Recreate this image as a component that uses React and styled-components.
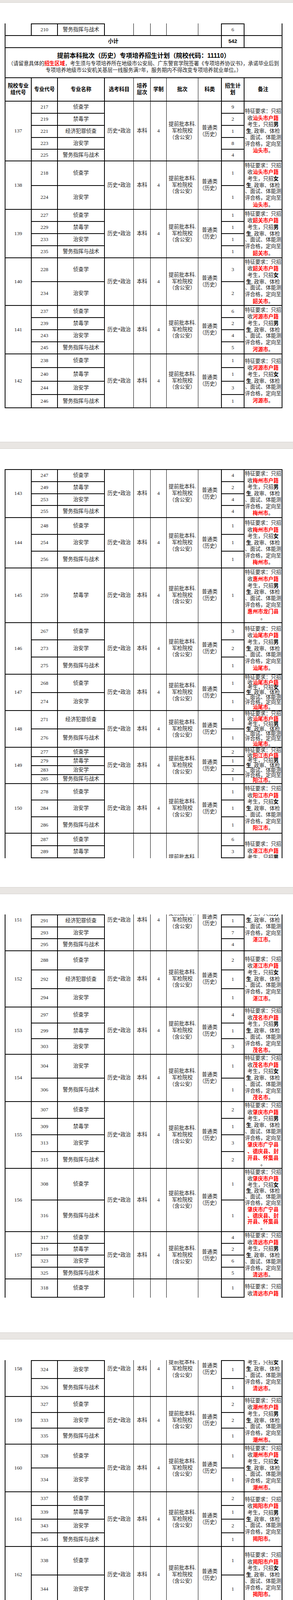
import styled, { createGlobalStyle } from "styled-components";

const GlobalStyle = createGlobalStyle`
  html, body { margin: 0; padding: 0; background: #e9e6e3; }
  body {
    font-family: "Liberation Serif", "Noto Sans CJK SC", serif;
    color: #222;
  }
`;

//#region data
const COLS = [68, 67, 120, 75, 43, 41, 81, 59, 58, 98];
// column boundaries (after column k) that carry a heavy rule
const HEAVY = new Set([1, 2, 3, 8, 9]);
const LH = 16.7;

const HEAD = [
  ["院校专业", "组代号"],
  ["专业代号"],
  ["专业名称"],
  ["选考科目"],
  ["培养", "层次"],
  ["学制"],
  ["批次"],
  ["科类"],
  ["招生计", "划"],
  ["备注"],
];

const Z = "侦查学";
const J = "禁毒学";
const A = "治安学";
const W = "警务指挥与战术";
const E = "经济犯罪侦查";

const BATCH = ["提前批本科.", "军检院校", "（含公安）"];
const KIND = ["普通类", "（历史）"];

const note = (city, g, tail) => [
  [["特征要求：只招"]],
  [["收"], [`${city}户籍`, "r"]],
  [["考生，只招"], [g, "b"]],
  [["生", "b"], [", 政审、体检"]],
  [["、面试、体能测"]],
  [["评合格，定向至"]],
  ...(tail || [[[city, "r"], ["。"]]]),
];
const ZQ = [
  [["肇庆市广宁县", "r"]],
  [["、德庆县、封", "r"]],
  [["开县、怀集县", "r"]],
  [["。"]],
];
const HZ = [[["惠州市龙门县", "r"]], [["。"]]];

const grp = (id, rows, city, g, extra = {}) => ({
  t: "group",
  id,
  subj: "历史*政治",
  level: "本科",
  years: "4",
  batch: BATCH,
  kind: KIND,
  note: city ? note(city, g, extra.tail) : [],
  rows,
  ...extra,
});

const PAGES = [
  {
    h: 1124,
    pad: 53,
    items: [
      grp("", [["210", W, "6", 31]], null, null, {
        split: "b",
        subj: "",
        level: "",
        years: "",
        batch: [],
        kind: [],
      }),
      { t: "sum", label: "小计", value: "542", h: 31 },
      {
        t: "title",
        h: 77,
        text: "提前本科批次（历史）专项培养招生计划（院校代码：11110）",
        sub: true,
      },
      { t: "head", h: 60 },
      grp("137", [["217", Z, "9", 31], ["219", J, "2", 31], ["221", E, "1", 31], ["223", A, "8", 30], ["225", W, "4", 30]], "汕头市", "男"),
      grp("138", [["218", Z, "1", 63], ["224", A, "1", 61]], "汕头市", "女"),
      grp("139", [["227", Z, "1", 31], ["229", J, "1", 31], ["233", A, "1", 31], ["235", W, "1", 31]], "韶关市", "男"),
      grp("140", [["228", Z, "3", 61], ["234", A, "2", 61]], "韶关市", "女"),
      grp("141", [["237", Z, "6", 31], ["239", J, "2", 31], ["243", A, "4", 31], ["245", W, "5", 31]], "河源市", "男"),
      grp("142", [["238", Z, "1", 35], ["240", J, "1", 35], ["244", A, "3", 34], ["246", W, "1", 35]], "河源市", "女"),
    ],
  },
  {
    h: 1122,
    pad: 52,
    items: [
      grp("143", [["247", Z, "4", 32], ["249", J, "2", 31], ["253", A, "4", 30], ["255", W, "4", 31]], "梅州市", "男"),
      grp("144", [["248", Z, "1", 43], ["254", A, "1", 43], ["256", W, "1", 43]], "梅州市", "女"),
      grp("145", [["259", J, "1", 140]], "惠州市", "男", { tail: HZ }),
      grp("146", [["267", Z, "3", 44], ["273", A, "2", 44], ["275", W, "1", 44]], "汕尾市", "男"),
      grp("147", [["268", Z, "1", 47], ["274", A, "1", 46]], "汕尾市", "女"),
      grp("148", [["271", E, "1", 47], ["276", W, "1", 47]], "汕尾市", "男"),
      grp("149", [["277", Z, "2", 24], ["279", J, "1", 23], ["283", A, "2", 23], ["285", W, "1", 23]], "阳江市", "男"),
      grp("150", [["278", Z, "1", 42], ["284", A, "1", 43], ["286", W, "1", 42]], "阳江市", "女"),
      grp("151", [["287", Z, "6", 32], ["289", J, "3", 32]], "湛江市", "男", { split: "a", full: 157 }),
    ],
  },
  {
    h: 1122,
    pad: 52,
    items: [
      grp("151", [["291", E, "1", 32], ["293", A, "7", 30], ["295", W, "4", 31]], "湛江市", "男", { split: "b", full: 157 }),
      grp("152", [["288", Z, "2", 49], ["292", E, "1", 48], ["294", A, "1", 47]], "湛江市", "女"),
      grp("153", [["297", Z, "4", 41], ["299", J, "1", 40], ["303", A, "3", 40]], "茂名市", "男"),
      grp("154", [["304", A, "1", 61], ["306", W, "1", 60]], "茂名市", "女"),
      grp("155", [["307", Z, "2", 43], ["309", J, "1", 42], ["313", A, "3", 43], ["315", W, "2", 43]], "肇庆市", "男", { tail: ZQ }),
      grp("156", [["308", Z, "1", 81], ["316", W, "1", 81]], "肇庆市", "女", { tail: ZQ }),
      grp("157", [["317", Z, "4", 30], ["319", J, "2", 30], ["323", A, "6", 31], ["325", W, "5", 30]], "清远市", "男"),
      grp("158", [["318", Z, "1", 48]], "清远市", "女", { split: "a", full: 141 }),
    ],
  },
  {
    h: 1122,
    pad: 53,
    items: [
      grp("158", [["324", A, "1", 47], ["326", W, "1", 46]], "清远市", "女", { split: "b", full: 141 }),
      grp("159", [["327", Z, "2", 41], ["333", A, "2", 40], ["335", W, "1", 41]], "潮州市", "男"),
      grp("160", [["328", Z, "1", 61], ["334", A, "1", 61]], "潮州市", "女"),
      grp("161", [["337", Z, "2", 35], ["339", J, "1", 35], ["343", A, "2", 35], ["345", W, "1", 35]], "揭阳市", "男"),
      grp("162", [["338", Z, "1", 73], ["344", A, "1", 72]], "揭阳市", "女"),
      grp("163", [["347", Z, "2", 35], ["349", J, "1", 35], ["353", A, "2", 35], ["355", W, "1", 35]], "云浮市", "男"),
      grp("164", [["348", Z, "1", 56], ["354", A, "1", 56]], "云浮市", "女"),
      { t: "sum", label: "小计", value: "202", h: 60 },
      { t: "title", h: 50, text: "本科批次（物理）招生计划（院校代码：11110）" },
    ],
  },
  {
    h: 545,
    pad: 54,
    items: [
      { t: "head", h: 66 },
      grp("201", [["401", "法学", "19", 34], ["403", "社会工作", "15", 33], ["405", "行政管理", "15", 34]], null, null, {
        subj: "物理",
        batch: ["本科批"],
        kind: ["普通类", "（物理）"],
      }),
      { t: "sum", label: "小计", value: "49", h: 33 },
      { t: "title", h: 51, text: "本科批次（历史）招生计划（院校代码：11110）" },
      { t: "head", h: 57 },
      grp("202", [["402", "法学", "45", 33], ["404", "社会工作", "37", 33], ["406", "行政管理", "38", 33]], null, null, {
        subj: "历史",
        batch: ["本科批"],
        kind: ["普通类", "（历史）"],
      }),
      { t: "sum", label: "小计", value: "120", h: 37 },
      { t: "sum", label: "合计", value: "1762", h: 36, plain: true },
    ],
  },
];
//#endregion

const asLines = (arr) => arr.map((s) => [[s]]);

// for a group split over two pages, keep only the lines that show in this part
function visibleLines(lines, lh, stackH, visH, split) {
  if (!split) return lines;
  const start = (stackH - lines.length * lh) / 2;
  return lines.map((segs, i) => {
    const top = start + i * lh;
    const shown = split === "a" ? top < visH - 3 : top + lh > stackH - visH + 3;
    return shown ? segs : [];
  });
}

// turns the page items into grid rows + placed cells
function buildPage(items) {
  const heights = [];
  const cells = [];
  items.forEach((it) => {
    const r0 = heights.length + 1;
    if (it.t === "group") {
      const total = it.rows.reduce((s, r) => s + r[3], 0);
      const full = it.full || total;
      const n = it.rows.length;
      const merged = (col, lines) => {
        // squeeze a long note into a short group instead of cutting it
        const lh = lines.length ? Math.min(LH, (full - 4) / lines.length) : LH;
        cells.push({
          kind: "stack",
          row: r0,
          rspan: n,
          col,
          cspan: 1,
          lines: visibleLines(lines, lh, full - 2, total - 2, it.split),
          full,
          lh,
          anchor: it.split === "b" ? "end" : it.split === "a" ? "start" : "center",
          openTop: it.split === "b",
          openBottom: it.split === "a",
        });
      };
      merged(1, it.id ? [[[it.id]]] : []);
      merged(4, it.subj ? [[[it.subj]]] : []);
      merged(5, it.level ? [[[it.level]]] : []);
      merged(6, it.years ? [[[it.years]]] : []);
      merged(7, asLines(it.batch));
      merged(8, asLines(it.kind));
      merged(10, it.note);
      it.rows.forEach((r, i) => {
        heights.push(r[3]);
        [2, 3, 9].forEach((col, k) =>
          cells.push({ kind: "text", row: r0 + i, rspan: 1, col, cspan: 1, text: r[k] })
        );
      });
    } else if (it.t === "head") {
      heights.push(it.h);
      HEAD.forEach((lines, i) =>
        cells.push({ kind: "lines", row: r0, rspan: 1, col: i + 1, cspan: 1, lines: asLines(lines), bold: true })
      );
    } else if (it.t === "sum") {
      heights.push(it.h);
      cells.push({ kind: "text", row: r0, rspan: 1, col: 1, cspan: 8, text: it.label, bold: true });
      cells.push({ kind: "text", row: r0, rspan: 1, col: 9, cspan: 1, text: it.value, bold: !it.plain });
      cells.push({ kind: "text", row: r0, rspan: 1, col: 10, cspan: 1, text: "" });
    } else {
      heights.push(it.h);
      cells.push({ kind: "title", row: r0, rspan: 1, col: 1, cspan: 10, text: it.text, sub: it.sub });
    }
  });
  const last = heights.length;
  cells.forEach((c) => {
    const endCol = c.col + c.cspan - 1;
    c.t = c.openTop ? 0 : c.row === 1 ? 2 : 1;
    c.b = c.openBottom ? 0 : c.row + c.rspan - 1 === last ? 2 : 1;
    c.l = c.col === 1 ? 2 : HEAVY.has(c.col - 1) ? 1 : 0;
    c.r = endCol === 10 ? 2 : 1;
  });
  return { heights, cells };
}

function Lines({ lines, lh = LH }) {
  return lines.map((segs, i) => (
    <Line key={i} $lh={lh}>
      {segs.map(([text, k], j) =>
        k === "r" ? (
          <Red key={j}>{text}</Red>
        ) : k === "b" ? (
          <Strong key={j}>{text}</Strong>
        ) : (
          <span key={j}>{text}</span>
        )
      )}
    </Line>
  ));
}

function CellBody({ c }) {
  if (c.kind === "stack")
    return (
      <Stack $h={c.full - 2}>
        <Lines lines={c.lines} lh={c.lh} />
      </Stack>
    );
  if (c.kind === "lines") return <Lines lines={c.lines} />;
  if (c.kind === "title")
    return (
      <>
        <Title>{c.text}</Title>
        {c.sub && (
          <>
            <Note>
              （请留意具体的<Red>招生区域</Red>，考生须与专项培养所在地级市公安局、广东警官学院签署《专项培养协议书》，承诺毕业后到
            </Note>
            <Note>专项培养地级市公安机关基层一线服务满7年，服务期内不得改变专项培养就业单位。）</Note>
          </>
        )}
      </>
    );
  return c.text;
}

function Sheet({ items }) {
  const { heights, cells } = buildPage(items);
  return (
    <Grid $rows={heights.map((h) => `${h}px`).join(" ")}>
      {cells.map((c, i) => (
        <Cell
          key={i}
          $row={c.row}
          $rspan={c.rspan}
          $col={c.col}
          $cspan={c.cspan}
          $t={c.t}
          $b={c.b}
          $l={c.l}
          $r={c.r}
          $bold={c.bold}
          $anchor={c.anchor}
        >
          <CellBody c={c} />
        </Cell>
      ))}
    </Grid>
  );
}

export default function App() {
  return (
    <>
      <GlobalStyle />
      <Viewer>
        {PAGES.map((p, i) => (
          <Page key={i} $h={p.h} $pad={p.pad}>
            <Sheet items={p.items} />
          </Page>
        ))}
      </Viewer>
    </>
  );
}

//#region styled components
const Viewer = styled.div`
  width: 749px;
  height: 5114px;
  overflow: hidden;
  padding-top: 7px;
  box-sizing: border-box;
  display: flex;
  flex-direction: column;
  gap: 18px;
`;

const Page = styled.section`
  flex: none;
  height: ${(p) => p.$h}px;
  box-sizing: border-box;
  padding: ${(p) => p.$pad}px 0 0 12px;
  background: #fff;
  box-shadow: 0 0 0 1px #d3d0cc;
  overflow: hidden;
`;

const Grid = styled.div`
  display: grid;
  grid-template-columns: ${COLS.map((w) => `${w}px`).join(" ")};
  grid-template-rows: ${(p) => p.$rows};
  width: 710px;
  font-size: 13.3px;
`;

const Cell = styled.div`
  grid-row: ${(p) => p.$row} / span ${(p) => p.$rspan};
  grid-column: ${(p) => p.$col} / span ${(p) => p.$cspan};
  box-sizing: border-box;
  min-width: 0;
  min-height: 0;
  overflow: hidden;
  display: flex;
  flex-direction: column;
  align-items: center;
  justify-content: ${(p) =>
    p.$anchor === "start" ? "flex-start" : p.$anchor === "end" ? "flex-end" : "center"};
  text-align: center;
  white-space: nowrap;
  border: 0 solid #000;
  border-top-width: ${(p) => p.$t}px;
  border-bottom-width: ${(p) => p.$b}px;
  border-left-width: ${(p) => p.$l}px;
  border-right-width: ${(p) => p.$r}px;
  font-family: ${(p) =>
    p.$bold
      ? `"Liberation Sans", "Noto Sans CJK SC", sans-serif`
      : `"Liberation Serif", "Noto Sans CJK SC", serif`};
  font-weight: ${(p) => (p.$bold ? 700 : 400)};
  color: ${(p) => (p.$bold ? "#000" : "#222")};
  line-height: ${LH}px;
`;

const Stack = styled.div`
  flex: none;
  align-self: stretch;
  height: ${(p) => p.$h}px;
  display: flex;
  flex-direction: column;
  align-items: center;
  justify-content: center;
`;

const Line = styled.div`
  flex: none;
  height: ${(p) => p.$lh}px;
  line-height: ${(p) => p.$lh}px;
  white-space: nowrap;
`;

const Red = styled.span`
  color: #ff0000;
  font-weight: 700;
  font-family: "Noto Sans CJK SC", sans-serif;
`;

const Strong = styled.span`
  color: #000;
  font-weight: 700;
  font-family: "Noto Sans CJK SC", sans-serif;
`;

const Title = styled.div`
  font-family: "Liberation Sans", "Noto Sans CJK SC", sans-serif;
  font-weight: 700;
  font-size: 16px;
  line-height: 20px;
  color: #000;
`;

const Note = styled.div`
  font-size: 13.2px;
  line-height: 17px;
  color: #222;
`;
//#endregion
